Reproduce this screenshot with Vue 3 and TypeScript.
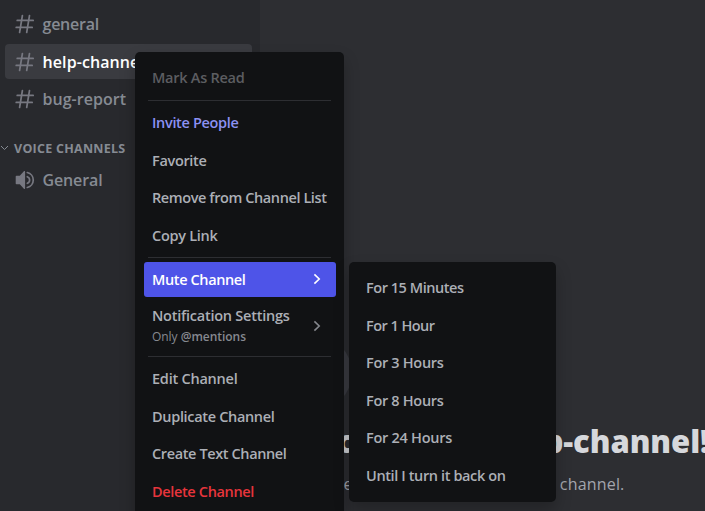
<script setup lang="ts">
import type { Directive } from 'vue'

interface Entry {
  label: string
  width: number
  kind?: string
  arrow?: boolean
  hint?: boolean
}

// Tracks a label so that it fills the given advance width.
const vFit: Directive<HTMLElement, number> = {
  mounted(el, binding) {
    const natural = el.getBoundingClientRect().width
    const count = (el.textContent ?? '').trim().length
    el.style.letterSpacing = `${(binding.value - natural) / count}px`
  },
}

const channels = [
  { name: 'general', width: 56.5, active: false },
  { name: 'help-channel', width: 101.5, active: true },
  { name: 'bug-report', width: 83.5, active: false },
]

const groups: Entry[][] = [
  [{ label: 'Mark As Read', width: 92.5, kind: 'disabled' }],
  [
    { label: 'Invite People', width: 86.5, kind: 'invite' },
    { label: 'Favorite', width: 54.5 },
    { label: 'Remove from Channel List', width: 174.5 },
    { label: 'Copy Link', width: 65.5 },
  ],
  [
    { label: 'Mute Channel', width: 93.5, kind: 'active', arrow: true },
    { label: 'Notification Settings', width: 137.5, kind: 'tall', arrow: true, hint: true },
  ],
  [
    { label: 'Edit Channel', width: 85.5 },
    { label: 'Duplicate Channel', width: 122.5 },
    { label: 'Create Text Channel', width: 134.5 },
    { label: 'Delete Channel', width: 102, kind: 'danger' },
  ],
]

const durations: Entry[] = [
  { label: 'For 15 Minutes', width: 97.5 },
  { label: 'For 1 Hour', width: 68.5 },
  { label: 'For 3 Hours', width: 77.5 },
  { label: 'For 8 Hours', width: 77.5 },
  { label: 'For 24 Hours', width: 86 },
  { label: 'Until I turn it back on', width: 139.5 },
]
</script>

<template>
  <div class="app">
    <aside class="sidebar">
      <div v-for="c in channels" :key="c.name" class="channel" :class="{ selected: c.active }">
        <svg class="icon" viewBox="0 0 20 20">
          <path d="M7.4 1.5 4.6 18.5M14.5 1.5 11.7 18.5M2.2 6.4H18.2M1.2 13.4H17.2" />
        </svg>
        <span v-fit="c.width">{{ c.name }}</span>
      </div>
      <div class="category">
        <svg class="caret" viewBox="0 0 9 6"><path d="M1 1 4.5 4.5 8 1" /></svg>
        <span v-fit="111.5">VOICE CHANNELS</span>
      </div>
      <div class="channel voice">
        <svg class="icon" viewBox="0 0 20 20">
          <path class="solid" d="M9.1 1.1a.7.7 0 0 1 1 .6v16.6a.7.7 0 0 1-1 .6L4.8 14.3H1.5a.8.8 0 0 1-.8-.8v-7a.8.8 0 0 1 .8-.8H4.8Z" />
          <path d="M12.3 6.7a3.5 3.5 0 0 1 0 6.6M12.3 2.5a7.7 7.7 0 0 1 0 15" />
        </svg>
        <span v-fit="60">General</span>
      </div>
    </aside>

    <main class="chat">
      <div class="badge"></div>
      <h1><span v-fit="433">Welcome to #help-channel!</span></h1>
      <p><span v-fit="348.5">This is the start of the #help-channel channel.</span></p>
    </main>

    <nav class="menu context">
      <template v-for="(group, g) in groups" :key="g">
        <hr v-if="g > 0" />
        <div v-for="e in group" :key="e.label" class="item" :class="e.kind">
          <div class="text">
            <span v-fit="e.width">{{ e.label }}</span>
            <small v-if="e.hint"><span v-fit="94">Only <b>@mentions</b></span></small>
          </div>
          <svg v-if="e.arrow" class="chevron" viewBox="0 0 8 12"><path d="M1.4 1.4 6.2 6 1.4 10.6" /></svg>
        </div>
      </template>
    </nav>

    <nav class="menu submenu">
      <div v-for="e in durations" :key="e.label" class="item">
        <div class="text"><span v-fit="e.width">{{ e.label }}</span></div>
      </div>
    </nav>
  </div>
</template>

<style>
body {
  overflow: hidden;
}
</style>

<style scoped>
.app {
  position: relative;
  display: flex;
  width: 705px;
  height: 511px;
  overflow: hidden;
  background: #2d2e32;
  font-family: 'Open Sans', 'Noto Sans', sans-serif;
  font-weight: 550;
  white-space: nowrap;
}
.app svg {
  fill: none;
  stroke: currentColor;
  flex: none;
}
.sidebar {
  box-sizing: border-box;
  width: 260px;
  flex: none;
  padding: 6.5px 8px 0 5px;
  background: #28292d;
  color: #868b93;
}
.channel {
  box-sizing: border-box;
  display: flex;
  align-items: center;
  height: 35px;
  margin-bottom: 2.5px;
  padding-left: 10px;
  border-radius: 4px;
  font-size: 16px;
  gap: 7.5px;
}
.channel.selected {
  background: #3a3b40;
  color: #fff;
}
.icon {
  width: 20px;
  height: 20px;
  color: #777881;
  stroke-width: 1.7;
  stroke-linecap: round;
}
.icon .solid {
  fill: currentColor;
  stroke: none;
}
.category {
  display: flex;
  align-items: center;
  height: 20px;
  margin: 21.5px 0 4.5px -5px;
  gap: 5px;
  font-size: 12.5px;
  font-weight: 700;
}
.caret {
  width: 9px;
  height: 6px;
}
.chat {
  flex: 1;
  min-width: 0;
  padding: 335px 0 0 16px;
}
.badge {
  width: 76px;
  height: 76px;
  border-radius: 50%;
  background: #3c3d44;
}
h1 {
  margin: 9px 0 0;
  font-size: 31px;
  line-height: 42px;
  font-weight: 800;
  color: #d6d8dc;
}
p {
  margin: 10px 0 0;
  font-size: 16px;
  line-height: 24px;
  font-weight: 400;
  color: #a3a5ad;
}
.menu {
  position: absolute;
  box-sizing: border-box;
  display: flex;
  flex-direction: column;
  gap: 2.5px;
  padding: 8.5px;
  border-radius: 5px;
  background: #111214;
  color: #acafb6;
  font-size: 14.5px;
  box-shadow: 0 8px 16px rgba(0, 0, 0, 0.24);
}
.context {
  left: 135px;
  top: 52px;
  width: 209px;
  height: 480px;
}
.submenu {
  left: 349px;
  top: 262px;
  width: 207px;
  height: 240px;
}
.item {
  box-sizing: border-box;
  display: flex;
  flex: none;
  align-items: center;
  justify-content: space-between;
  height: 35px;
  padding: 0 15px 0 8.5px;
  border-radius: 3px;
}
.text {
  display: flex;
  flex-direction: column;
  align-items: flex-start;
}
.text > span {
  line-height: 20px;
}
.item.disabled {
  color: #5c5d61;
}
.item.invite {
  color: #8c91f3;
}
.item.active {
  margin-top: -1px;
  background: #4e54e8;
  color: #fff;
}
.item.danger {
  color: #e8353c;
}
.item.tall {
  height: 52px;
  padding-top: 2px;
}
small {
  font-size: 12px;
  line-height: 21px;
  font-weight: 400;
  color: #868990;
}
small b {
  font-weight: 650;
}
.chevron {
  width: 8px;
  height: 12px;
  margin-top: -2px;
  stroke-width: 1.6;
}
.tall .chevron {
  color: #85878d;
}
hr {
  flex: none;
  width: 183px;
  height: 1px;
  margin: 1.5px 0 2.5px 4.5px;
  border: 0;
  background: #2d2e32;
}
</style>
